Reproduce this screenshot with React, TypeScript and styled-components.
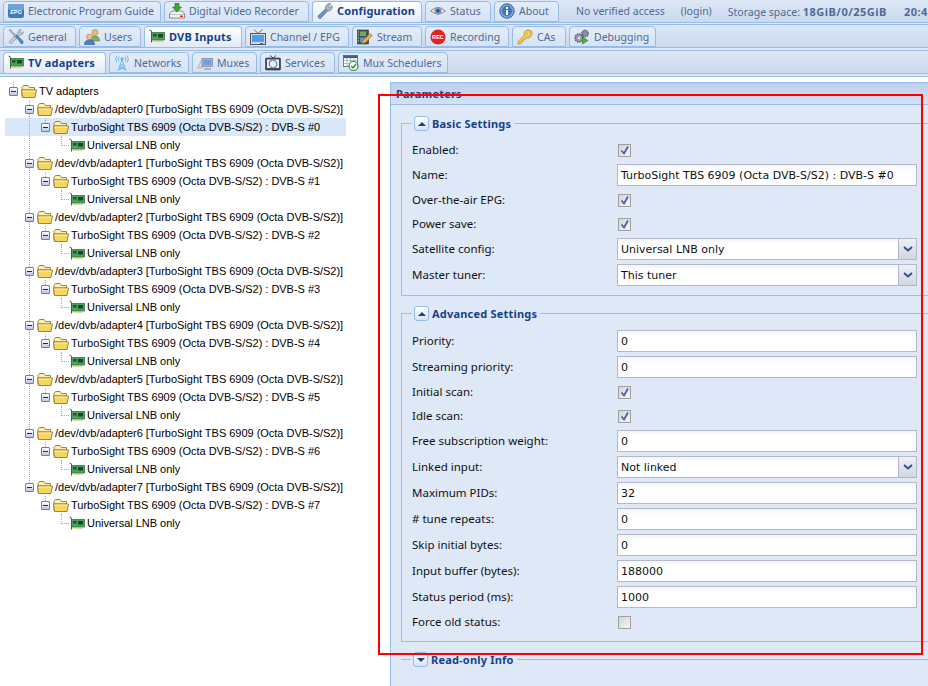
import React from 'react';
import styled, { createGlobalStyle } from 'styled-components';

// Small pictures used in the tabs and the tree
const Svg = styled.svg`
  width: 16px;
  height: 16px;
  flex: none;
  display: block;
`;

const EpgIcon = () => (
  <Svg viewBox="0 0 16 16">
    <rect x="0" y="1" width="16" height="14" rx="2" fill="#3f7cbf" />
    <rect x="0" y="1" width="16" height="6" rx="2" fill="#6ea3d8" />
    <text x="8" y="10.5" fontSize="5.5" fontWeight="700" fontStyle="italic" fill="#fff" textAnchor="middle" fontFamily="Liberation Sans, sans-serif">EPG</text>
  </Svg>
);
const DvrIcon = () => (
  <Svg viewBox="0 0 16 16">
    <path d="M3 8 L13 8 L15.5 11 L15.5 15 L.5 15 L.5 11 Z" fill="#f3f3f3" stroke="#8a8a8a" />
    <path d="M1 11.5 H15" stroke="#c4c4c4" />
    <rect x="11" y="12.5" width="3" height="1.5" fill="#d8322a" />
    <path d="M6 0 H10 V4 H12.5 L8 9 L3.5 4 H6 Z" fill="#3aa335" stroke="#1f7a22" strokeWidth=".6" />
  </Svg>
);
const WrenchIcon = () => (
  <Svg viewBox="0 0 16 16">
    <path d="M1 13 L9 5.5 L11 7.5 L3.5 15.5 Q1 15.5 1 13 Z" fill="#6f94cf" stroke="#4c6ea8" strokeWidth=".7" />
    <path d="M8.5 6 Q8 2 11 .8 Q13 .2 14 .8 L11.5 3 L12.5 4.5 L15 2.5 Q16 5 14 7 Q12 8.6 10.5 8 Z" fill="#a9b4c4" stroke="#737f92" strokeWidth=".7" />
  </Svg>
);
const EyeIcon = () => (
  <Svg viewBox="0 0 16 16">
    <path d="M.5 8 Q8 1 15.5 8 Q8 14 .5 8 Z" fill="#f4e9d8" stroke="#a8876a" />
    <circle cx="8" cy="7.8" r="3.6" fill="#6f96d6" />
    <circle cx="8" cy="7.8" r="1.5" fill="#25427c" />
  </Svg>
);
const InfoIcon = () => (
  <Svg viewBox="0 0 16 16">
    <circle cx="8" cy="8" r="7.2" fill="#7ba3d3" stroke="#3a659c" />
    <circle cx="8" cy="8" r="5" fill="#3f76b4" />
    <rect x="7" y="7" width="2" height="5" fill="#fff" />
    <rect x="7" y="4" width="2" height="2" fill="#fff" />
  </Svg>
);
const ToolsIcon = () => (
  <Svg viewBox="0 0 16 16">
    <path d="M5.5 8 L11 2.5 L13 4.5 L3 15 L1 13 Z" fill="#c9ccd2" stroke="#83888f" strokeWidth=".6" />
    <path d="M10 3 Q10 1 12.5 .5 L13.5 .6 L12 2.5 L13.5 4 L15.4 2.5 Q15.5 5.5 13 6 L11.5 6 Z" fill="#c9ccd2" stroke="#83888f" strokeWidth=".6" />
    <path d="M1 1 L2.5 .5 L8.5 6.5 L7 8 Z" fill="#b9bec6" stroke="#7c828c" strokeWidth=".6" />
    <path d="M7.5 7.5 L9 6 L15.2 12.5 Q15.5 14.5 13.5 15 Z" fill="#4d8bd0" stroke="#2f639f" strokeWidth=".6" />
  </Svg>
);
const UsersIcon = () => (
  <Svg viewBox="0 0 16 16">
    <circle cx="11" cy="3.5" r="3" fill="#eab77f" stroke="#b07d43" strokeWidth=".6" />
    <path d="M7 12 Q7 7 11 7 Q15 7 15.5 11 L15.5 12 Z" fill="#7fb069" stroke="#55813f" strokeWidth=".6" />
    <circle cx="5.5" cy="8" r="2.8" fill="#f0bf8c" stroke="#b4713c" strokeWidth=".6" />
    <path d="M.5 15.5 Q.5 11 5.5 11 Q10.5 11 10.5 15.5 Z" fill="#4d7fc4" stroke="#2f5791" strokeWidth=".6" />
  </Svg>
);
const CardIcon = () => (
  <Svg viewBox="0 0 16 16">
    <path d="M.5 2 L2.5 3 V14.5" fill="none" stroke="#4d5a4c" strokeWidth="1" />
    <rect x="2.5" y="4.5" width="13" height="7.5" fill="#4aa35c" stroke="#24682f" strokeWidth=".7" />
    <rect x="4" y="6" width="3.5" height="2.5" fill="#23532f" />
    <rect x="9" y="6" width="5" height="3.5" fill="#1d4427" />
    <path d="M4 13 H14" stroke="#c9a93f" strokeWidth="1.4" strokeDasharray="1 .6" />
  </Svg>
);
const TvIcon = () => (
  <Svg viewBox="0 0 16 16">
    <path d="M4 .5 L8 4.5 L12.5 .5" fill="none" stroke="#6c6f75" />
    <rect x=".5" y="4.5" width="15" height="11" fill="#d3d6da" stroke="#53575e" />
    <rect x="2" y="6" width="12" height="7" fill="#4aa1e8" />
    <rect x="10" y="14" width="3" height="1" fill="#d8322a" />
  </Svg>
);
const StreamIcon = () => (
  <Svg viewBox="0 0 16 16">
    <rect x=".5" y="1" width="11" height="14" fill="#41505c" stroke="#2c3640" strokeWidth=".6" />
    <rect x="3" y="2.5" width="6" height="4.5" fill="#79a84e" />
    <rect x="3" y="8.5" width="6" height="5" fill="#5d92c9" />
    <path d="M1 3 H2 M1 6 H2 M1 9 H2 M1 12 H2" stroke="#dfe3e6" />
    <path d="M5 14.5 L6 11.5 L13 4.5 L15.5 6.5 L8.5 13.5 Z" fill="#eab13f" stroke="#a8741f" strokeWidth=".6" />
  </Svg>
);
const RecIcon = () => (
  <Svg viewBox="0 0 16 16">
    <circle cx="8" cy="8" r="7.6" fill="#e0241c" />
    <text x="8" y="10" fontSize="5.6" fontWeight="700" fill="#fff" textAnchor="middle" fontFamily="Liberation Sans, sans-serif">REC</text>
  </Svg>
);
const KeyIcon = () => (
  <Svg viewBox="0 0 16 16">
    <path d="M1 12.5 L7 6.5 Q6.5 3 9 1.5 Q12 0 14.5 2 Q16 5 14 7.5 Q12 9.5 9.5 9 L7.5 11 L6 11 L6 12.5 L4.5 12.5 L4.5 14 L3 15 L1 15 Z" fill="#f2c84b" stroke="#b98a1e" strokeWidth=".7" />
    <circle cx="11.5" cy="4.5" r="1.3" fill="#fff3c8" stroke="#b98a1e" strokeWidth=".5" />
  </Svg>
);
const GearsIcon = () => (
  <Svg viewBox="0 0 16 16">
    <circle cx="11" cy="4.5" r="3.2" fill="#8d8fa3" stroke="#5c5e72" strokeWidth="1.4" strokeDasharray="1.3 .7" />
    <circle cx="5" cy="9" r="4" fill="#9a9cae" stroke="#5c5e72" strokeWidth="1.6" strokeDasharray="1.5 .8" />
    <circle cx="5" cy="9" r="1.2" fill="#e9eaf0" />
    <path d="M8.5 8 L14 11.5 L8.5 15 Z" fill="#4fae3a" stroke="#2f7e24" strokeWidth=".6" />
  </Svg>
);
const TowerIcon = () => (
  <Svg viewBox="0 0 16 16" fill="none" stroke="#5fb4e4" strokeWidth=".9">
    <path d="M8 5 L4 15.5 M8 5 L12 15.5 M6 10 H10 M5 13 H11 M5.5 11 L11 15 M10.5 11 L5 15" />
    <circle cx="8" cy="4" r="1.2" fill="#5fb4e4" />
    <path d="M5 1.5 Q3.5 4 5 6.5 M11 1.5 Q12.5 4 11 6.5 M2.8 .5 Q.6 4 2.8 7.5 M13.2 .5 Q15.4 4 13.2 7.5" />
  </Svg>
);
const MuxIcon = () => (
  <Svg viewBox="0 0 16 16">
    <path d="M.5 13 L5 4 L9 4 L5 13 Z" fill="#d6d8dc" stroke="#9a9da3" strokeWidth=".6" />
    <rect x="5" y="3.5" width="10.5" height="8" fill="#9fb4d6" stroke="#7f8590" strokeWidth=".7" />
    <rect x="6.5" y="5" width="7.5" height="5" fill="#6d9ee0" />
    <path d="M7 14 H14" stroke="#a5a8ad" strokeWidth="1.6" />
  </Svg>
);
const ServiceIcon = () => (
  <Svg viewBox="0 0 16 16">
    <path d="M5 .5 L8 3 L11 .5" fill="none" stroke="#45484e" />
    <rect x=".5" y="3" width="15" height="12" rx="1" fill="#4b4e55" stroke="#2b2d31" strokeWidth=".6" />
    <rect x="2" y="4.5" width="12" height="8.5" fill="#e8eef6" />
    <path d="M5 11 A3.5 3.5 0 0 1 11 6.5 M11 7 A3.5 3.5 0 0 1 5.5 11.5" fill="none" stroke="#4a7fc0" strokeWidth="1.2" />
  </Svg>
);
const ScheduleIcon = () => (
  <Svg viewBox="0 0 16 16">
    <rect x=".5" y=".5" width="14" height="11" fill="#fff" stroke="#55606f" strokeWidth=".8" />
    <rect x=".5" y=".5" width="14" height="2.6" fill="#3f5f93" />
    <path d="M1 5.5 H14 M1 8.5 H14 M4 3 V11 M7.5 3 V11 M11 3 V11" stroke="#97a3b5" strokeWidth=".7" />
    <circle cx="10.5" cy="11" r="4.5" fill="#fff" stroke="#2f8e35" strokeWidth="1.2" />
    <path d="M8.2 11 L10 13 L13 9" fill="none" stroke="#2f8e35" strokeWidth="1.4" />
  </Svg>
);
const FolderIcon = () => (
  <Svg viewBox="0 0 16 16">
    <path d="M1 13.5 V4.5 L2.5 2.5 H7 L8.5 4.5 H13.5 V7 H1" fill="#fdeeb0" stroke="#8f7a30" strokeWidth=".9" />
    <path d="M.5 7 H15.5 L14 14.5 H1.5 Z" fill="#f8d55f" stroke="#8f7a30" strokeWidth=".9" />
    <path d="M1.5 8 H14.5" stroke="#fff3c4" strokeWidth=".9" />
  </Svg>
);

const GlobalStyle = createGlobalStyle`
  html, body {
    margin: 0;
    padding: 0;
    background: #fff;
    overflow: hidden;
  }
`;

const Viewport = styled.div`
  position: relative;
  width: 928px;
  height: 686px;
  overflow: hidden;
  display: flex;
  flex-direction: column;
  font-family: 'Noto Sans', 'Liberation Sans', sans-serif;
  font-size: 10.5px;
`;

const TabBar = styled.div<{ $foot: number; $closed?: boolean }>`
  flex: none;
  background: #dfe8f6;
  padding-bottom: ${(p) => p.$foot}px;
  border-bottom: ${(p) => (p.$closed ? '1px solid #99bbe8' : 'none')};
`;

const TabRow = styled.div<{ $first?: boolean }>`
  height: 22px;
  display: flex;
  align-items: flex-end;
  gap: 3px;
  padding-left: 3px;
  white-space: nowrap;
  overflow: hidden;
  background: linear-gradient(#dde7f6, #cbdaee);
  border-top: ${(p) => (p.$first ? 'none' : '1px solid #99bbe8')};
  border-bottom: 1px solid #99bbe8;
`;

const Tab = styled.div<{ $active?: boolean; $lift?: boolean; $width: number }>`
  flex: none;
  width: ${(p) => p.$width}px;
  height: ${(p) => (p.$active ? 23 : 21)}px;
  margin-bottom: ${(p) => (p.$active ? -2 : 0)}px;
  box-sizing: border-box;
  display: flex;
  align-items: center;
  gap: 4px;
  padding: 0 0 ${(p) => (p.$active ? 4 : 0) + (p.$lift ? 1 : 0)}px 4px;
  border: 1px solid #99bbe8;
  border-bottom: ${(p) => (p.$active ? 'none' : '1px solid #99bbe8')};
  border-radius: 4px 4px 0 0;
  background: ${(p) =>
    p.$active ? 'linear-gradient(#ffffff, #dfe8f6)' : 'linear-gradient(#e3ecf9, #d6e3f6)'};
  color: ${(p) => (p.$active ? '#15428b' : '#4f6a94')};
  font-size: ${(p) => (p.$active ? 11 : 10.5)}px;
  font-weight: ${(p) => (p.$active ? 700 : 400)};
  letter-spacing: ${(p) => (p.$active ? 0.15 : 0)}px;
`;

const StatusBar = styled.div`
  display: flex;
  align-items: center;
  gap: 16px;
  height: 20px;
  margin: 0 0 1px 14px;
  color: #4f6a94;
`;

const Strong = styled.b`
  font-size: 11px;
  font-weight: 700;
  letter-spacing: 0.5px;
`;

const Clock = styled(Strong)`
  margin-left: 1px;
`;

const Content = styled.div`
  flex: 1;
  min-height: 0;
  display: flex;
`;

const TreePanel = styled.div`
  flex: none;
  width: 390px;
  box-sizing: border-box;
  padding: 5px 0 0 5px;
`;

const TreeRow = styled.div<{ $selected?: boolean }>`
  width: 341px;
  height: 18px;
  display: flex;
  align-items: center;
  font-family: 'Liberation Sans', Arial, sans-serif;
  font-size: 11px;
  letter-spacing: -0.02px;
  color: #000;
  white-space: nowrap;
  background: ${(p) => (p.$selected ? '#d9e8fb' : 'transparent')};
`;

const TreeLabel = styled.span`
  margin-left: 2px;
`;

const Guide = styled.span<{ $line?: boolean }>`
  flex: none;
  width: 16px;
  height: 18px;
  background-image: ${(p) =>
    p.$line ? 'linear-gradient(#a9a9a9 50%, transparent 50%)' : 'none'};
  background-size: 1px 2px;
  background-position: 8px 0;
  background-repeat: repeat-y;
`;

const Elbow = styled.span`
  flex: none;
  width: 16px;
  height: 18px;
  box-sizing: border-box;
  position: relative;
  &::before {
    content: '';
    position: absolute;
    left: 8px;
    top: 0;
    width: 7px;
    height: 9px;
    border-left: 1px dotted #a9a9a9;
    border-bottom: 1px dotted #a9a9a9;
  }
`;

const Expander = styled.span<{ $through?: boolean }>`
  flex: none;
  width: 16px;
  height: 18px;
  position: relative;
  display: flex;
  align-items: center;
  justify-content: center;
  &::before {
    content: '';
    position: absolute;
    left: 8px;
    top: 0;
    width: 1px;
    height: ${(p) => (p.$through ? 18 : 5)}px;
    background-image: linear-gradient(#a9a9a9 50%, transparent 50%);
    background-size: 1px 2px;
  }
`;

const ExpanderBox = styled.span`
  position: relative;
  width: 9px;
  height: 9px;
  box-sizing: border-box;
  border: 1px solid #6b7f9e;
  border-radius: 1px;
  background: linear-gradient(#ffffff, #b9c9df);
  &::after {
    content: '';
    position: absolute;
    left: 1px;
    top: 3px;
    width: 5px;
    height: 1px;
    background: #1d2c44;
  }
`;

const ParamPanel = styled.div`
  flex: 1;
  min-width: 0;
  margin-top: 5px;
  border-top: 1px solid #99bbe8;
  border-left: 1px solid #99bbe8;
  background: #dfe8f6;
  overflow: hidden;
`;

const PanelHeader = styled.div`
  height: 21px;
  line-height: 21px;
  padding-left: 5px;
  font-size: 11px;
  font-weight: 700;
  letter-spacing: 0.2px;
  color: #15428b;
  background: linear-gradient(#bdd1ec, #d3e1f3);
  border-bottom: 1px solid #99bbe8;
`;

const PanelBody = styled.div`
  width: 640px;
  padding: 11px 0 0 10px;
`;

const Group = styled.fieldset<{ $collapsed?: boolean }>`
  margin: 0 0 10px;
  min-width: 0;
  padding: ${(p) => (p.$collapsed ? '0 10px' : '7px 10px')};
  border: 1px solid #b5b8c8;
  border-width: ${(p) => (p.$collapsed ? '1px 0 0' : '1px')};
  height: ${(p) => (p.$collapsed ? '15px' : 'auto')};
`;

const GroupTitle = styled.legend`
  display: flex;
  align-items: center;
  gap: 3px;
  height: 15px;
  padding: 0 3px 0 2px;
  font-size: 11px;
  font-weight: 700;
  letter-spacing: 0.2px;
  color: #15428b;
`;

const CollapseTool = styled.span<{ $down?: boolean }>`
  width: 15px;
  height: 15px;
  box-sizing: border-box;
  display: flex;
  align-items: center;
  justify-content: center;
  border: 1px solid #99bbe8;
  border-radius: 3px;
  background: linear-gradient(#ffffff, #d6e3f6);
  &::after {
    content: '';
    width: 0;
    height: 0;
    border-left: 4px solid transparent;
    border-right: 4px solid transparent;
    border-bottom: ${(p) => (p.$down ? 'none' : '4px solid #15428b')};
    border-top: ${(p) => (p.$down ? '4px solid #15428b' : 'none')};
  }
`;

const FormRow = styled.div<{ $tall?: boolean }>`
  height: ${(p) => (p.$tall ? 26 : 24)}px;
  display: flex;
  align-items: center;
`;

const FormLabel = styled.div`
  flex: none;
  width: 205px;
  padding-bottom: 1px;
  font-size: 11.5px;
  color: #111;
`;

const CheckBox = styled.span`
  width: 13px;
  height: 13px;
  margin-left: 1px;
  box-sizing: border-box;
  border: 1px solid #a0a0a0;
  background: linear-gradient(135deg, #cfd3da, #f4f5f7);
  display: block;
`;

const TextField = styled.div`
  width: 300px;
  height: 22px;
  box-sizing: border-box;
  padding-left: 3px;
  line-height: 22px;
  font-family: 'DejaVu Sans', 'Liberation Sans', sans-serif;
  font-size: 11px;
  color: #111;
  white-space: nowrap;
  border: 1px solid #b5b8c8;
  background: linear-gradient(#f2f4f7, #ffffff 5px);
  position: relative;
`;

const Trigger = styled.span`
  position: absolute;
  right: 0;
  top: 0;
  width: 17px;
  height: 20px;
  display: flex;
  align-items: center;
  justify-content: center;
  border-left: 1px solid #b5b8c8;
  background: linear-gradient(#eef0f4, #d2d6de);
`;

const CheckMark = () => (
  <CheckBox>
    <svg viewBox="0 0 11 11" width="11" height="11" style={{ display: 'block' }}>
      <path d="M2.5 5.5 L5 8.5 L9 1.5" fill="none" stroke="#4a62a8" strokeWidth="1.8" />
    </svg>
  </CheckBox>
);

const Chevron = () => (
  <svg viewBox="0 0 10 6" width="10" height="6">
    <path d="M1 1 L5 4.5 L9 1" fill="none" stroke="#2f4f8f" strokeWidth="1.9" />
  </svg>
);

const RedFrame = styled.div`
  position: absolute;
  left: 378px;
  top: 94px;
  width: 545px;
  height: 561px;
  box-sizing: border-box;
  border: 2px solid #f00;
  pointer-events: none;
`;

type TabItem = { label: string; icon: React.ReactNode; width: number; active?: boolean };

const mainTabs: TabItem[] = [
  { label: 'Electronic Program Guide', icon: <EpgIcon />, width: 158 },
  { label: 'Digital Video Recorder', icon: <DvrIcon />, width: 145 },
  { label: 'Configuration', icon: <WrenchIcon />, width: 110, active: true },
  { label: 'Status', icon: <EyeIcon />, width: 66 },
  { label: 'About', icon: <InfoIcon />, width: 65 },
];

const configTabs: TabItem[] = [
  { label: 'General', icon: <ToolsIcon />, width: 73 },
  { label: 'Users', icon: <UsersIcon />, width: 62 },
  { label: 'DVB Inputs', icon: <CardIcon />, width: 98, active: true },
  { label: 'Channel / EPG', icon: <TvIcon />, width: 104 },
  { label: 'Stream', icon: <StreamIcon />, width: 70 },
  { label: 'Recording', icon: <RecIcon />, width: 84 },
  { label: 'CAs', icon: <KeyIcon />, width: 54 },
  { label: 'Debugging', icon: <GearsIcon />, width: 87 },
];

const dvbTabs: TabItem[] = [
  { label: 'TV adapters', icon: <CardIcon />, width: 103, active: true },
  { label: 'Networks', icon: <TowerIcon />, width: 80 },
  { label: 'Muxes', icon: <MuxIcon />, width: 65 },
  { label: 'Services', icon: <ServiceIcon />, width: 75 },
  { label: 'Mux Schedulers', icon: <ScheduleIcon />, width: 110 },
];

type Field =
  | { label: string; kind: 'check'; on: boolean }
  | { label: string; kind: 'text' | 'select'; value: string };

const basicFields: Field[] = [
  { label: 'Enabled:', kind: 'check', on: true },
  { label: 'Name:', kind: 'text', value: 'TurboSight TBS 6909 (Octa DVB-S/S2) : DVB-S #0' },
  { label: 'Over-the-air EPG:', kind: 'check', on: true },
  { label: 'Power save:', kind: 'check', on: true },
  { label: 'Satellite config:', kind: 'select', value: 'Universal LNB only' },
  { label: 'Master tuner:', kind: 'select', value: 'This tuner' },
];

const advancedFields: Field[] = [
  { label: 'Priority:', kind: 'text', value: '0' },
  { label: 'Streaming priority:', kind: 'text', value: '0' },
  { label: 'Initial scan:', kind: 'check', on: true },
  { label: 'Idle scan:', kind: 'check', on: true },
  { label: 'Free subscription weight:', kind: 'text', value: '0' },
  { label: 'Linked input:', kind: 'select', value: 'Not linked' },
  { label: 'Maximum PIDs:', kind: 'text', value: '32' },
  { label: '# tune repeats:', kind: 'text', value: '0' },
  { label: 'Skip initial bytes:', kind: 'text', value: '0' },
  { label: 'Input buffer (bytes):', kind: 'text', value: '188000' },
  { label: 'Status period (ms):', kind: 'text', value: '1000' },
  { label: 'Force old status:', kind: 'check', on: false },
];

const Tabs = ({ items, lift }: { items: TabItem[]; lift?: boolean }) => (
  <>
    {items.map((t) => (
      <Tab key={t.label} $active={t.active} $lift={lift} $width={t.width}>
        {t.icon}
        {t.label}
      </Tab>
    ))}
  </>
);

const FieldRow = ({ field }: { field: Field }) => (
  <FormRow $tall={field.kind !== 'check'}>
    <FormLabel>{field.label}</FormLabel>
    {field.kind === 'check' ? (
      field.on ? <CheckMark /> : <CheckBox />
    ) : (
      <TextField>
        {field.value}
        {field.kind === 'select' && (
          <Trigger>
            <Chevron />
          </Trigger>
        )}
      </TextField>
    )}
  </FormRow>
);

const adapters = [0, 1, 2, 3, 4, 5, 6, 7];

const App = () => (
  <Viewport>
    <GlobalStyle />
    <TabBar $foot={1}>
      <TabRow $first>
        <Tabs items={mainTabs} lift />
        <StatusBar>
          <span>No verified access</span>
          <span>(login)</span>
          <span>
            Storage space: <Strong>18GiB/0/25GiB</Strong>
          </span>
          <Clock>20:45</Clock>
        </StatusBar>
      </TabRow>
    </TabBar>
    <TabBar $foot={2}>
      <TabRow>
        <Tabs items={configTabs} />
      </TabRow>
    </TabBar>
    <TabBar $foot={2} $closed>
      <TabRow>
        <Tabs items={dvbTabs} />
      </TabRow>
    </TabBar>
    <Content>
      <TreePanel>
        <TreeRow>
          <Expander>
            <ExpanderBox />
          </Expander>
          <FolderIcon />
          <TreeLabel>TV adapters</TreeLabel>
        </TreeRow>
        {adapters.map((n) => (
          <React.Fragment key={n}>
            <TreeRow>
              <Guide />
              <Expander $through={n < 7}>
                <ExpanderBox />
              </Expander>
              <FolderIcon />
              <TreeLabel>/dev/dvb/adapter{n} [TurboSight TBS 6909 (Octa DVB-S/S2)]</TreeLabel>
            </TreeRow>
            <TreeRow $selected={n === 0}>
              <Guide />
              <Guide $line={n < 7} />
              <Expander>
                <ExpanderBox />
              </Expander>
              <FolderIcon />
              <TreeLabel>TurboSight TBS 6909 (Octa DVB-S/S2) : DVB-S #{n}</TreeLabel>
            </TreeRow>
            <TreeRow>
              <Guide />
              <Guide $line={n < 7} />
              <Guide />
              <Elbow />
              <CardIcon />
              <TreeLabel>Universal LNB only</TreeLabel>
            </TreeRow>
          </React.Fragment>
        ))}
      </TreePanel>
      <ParamPanel>
        <PanelHeader>Parameters</PanelHeader>
        <PanelBody>
          <Group>
            <GroupTitle>
              <CollapseTool />
              Basic Settings
            </GroupTitle>
            {basicFields.map((f) => (
              <FieldRow key={f.label} field={f} />
            ))}
          </Group>
          <Group>
            <GroupTitle>
              <CollapseTool />
              Advanced Settings
            </GroupTitle>
            {advancedFields.map((f) => (
              <FieldRow key={f.label} field={f} />
            ))}
          </Group>
          <Group $collapsed>
            <GroupTitle>
              <CollapseTool $down />
              Read-only Info
            </GroupTitle>
          </Group>
        </PanelBody>
      </ParamPanel>
    </Content>
    <RedFrame />
  </Viewport>
);

export default App;
